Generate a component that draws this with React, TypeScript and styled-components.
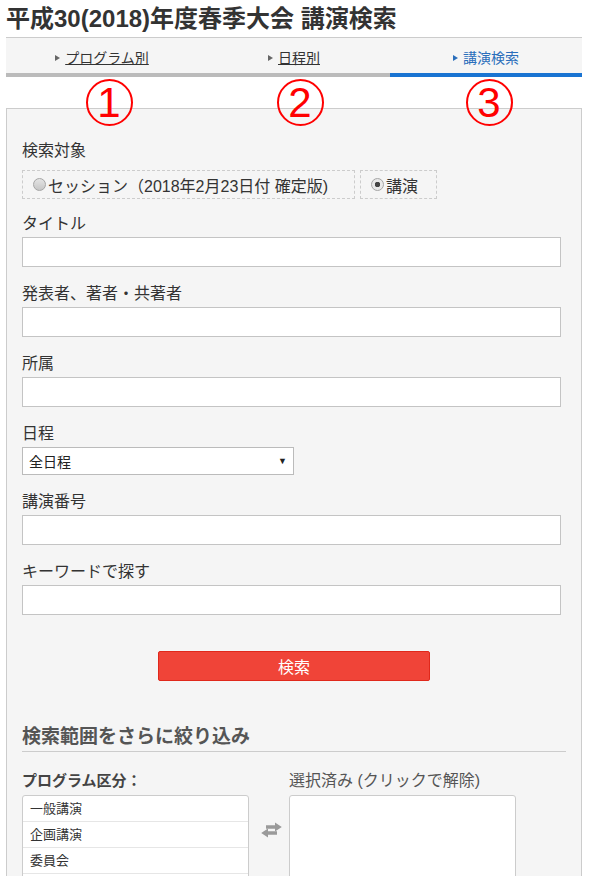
import styled, { createGlobalStyle } from "styled-components";

const GlobalStyle = createGlobalStyle`
  body {
    margin: 0;
    background: #fff;
    color: #333;
    font-family: "Liberation Sans", "Noto Sans CJK JP", sans-serif;
  }
`;

const Page = styled.div`
  width: 576px;
  padding: 4px 14px 0 6px;
`;

const Title = styled.h1`
  margin: 0 0 3px;
  font-size: 24px;
  line-height: 30px;
  font-weight: bold;
  color: #333;
`;

const TabsWrap = styled.div`
  position: relative;
`;

const TabBar = styled.div`
  display: grid;
  grid-template-columns: repeat(3, 1fr);
  border-top: 1px solid #ccc;
  background: #f5f5f5;
`;

const Tab = styled.div<{ $active?: boolean }>`
  display: flex;
  align-items: center;
  justify-content: center;
  height: 39px;
  padding-top: 4px;
  box-sizing: border-box;
  border-bottom: 4px solid ${(p) => (p.$active ? "#1a74d2" : "#bbb")};
  font-size: 14px;
  color: ${(p) => (p.$active ? "#2a6ebb" : "#333")};
`;

const Caret = styled.span<{ $active?: boolean }>`
  width: 0;
  height: 0;
  border-left: 5px solid ${(p) => (p.$active ? "#2a6ebb" : "#666")};
  border-top: 3.5px solid transparent;
  border-bottom: 3.5px solid transparent;
  margin-right: 5px;
`;

const TabLink = styled.span<{ $active?: boolean }>`
  text-decoration: ${(p) => (p.$active ? "none" : "underline")};
  line-height: 20px;
`;

const MarkRow = styled.div`
  position: absolute;
  top: 100%;
  left: 0;
  right: 0;
  display: grid;
  grid-template-columns: repeat(3, 1fr);
  padding-top: 2px;
  pointer-events: none;
  z-index: 2;
`;

const Mark = styled.div<{ $shift: number }>`
  justify-self: center;
  margin-left: ${(p) => p.$shift}px;
  width: 43px;
  height: 43px;
  border: 2px solid #f00;
  border-radius: 50%;
  color: #f00;
  font-family: "Liberation Sans", sans-serif;
  font-size: 42px;
  line-height: 44px;
  text-align: center;
`;

const Panel = styled.div`
  margin-top: 31px;
  border: 1px solid #ccc;
  background: #f5f5f5;
  padding: 31px 15px 40px;
`;

const Label = styled.div`
  font-size: 16px;
  line-height: 22px;
  margin-bottom: 2px;
  color: #333;
`;

const Field = styled.div`
  margin-bottom: 16px;
`;

const TargetLabel = styled(Label)`
  margin-bottom: 8px;
`;

const RadioRow = styled.div`
  display: flex;
  gap: 5px;
  margin-bottom: 14px;
`;

const RadioOption = styled.label<{ $padRight: number }>`
  display: inline-flex;
  align-items: center;
  height: 29px;
  box-sizing: border-box;
  border: 1px dashed #ccc;
  padding: 0 ${(p) => p.$padRight}px 0 10px;
  font-size: 16px;
  color: #333;
`;

const RadioDot = styled.span<{ $checked?: boolean }>`
  width: 13px;
  height: 13px;
  box-sizing: border-box;
  border-radius: 50%;
  border: 1px solid #a5a5a5;
  margin-right: 2px;
  background: ${(p) =>
    p.$checked
      ? "radial-gradient(circle, #444 0 2.5px, #e8e8e8 3px)"
      : "linear-gradient(#e4e4e4, #c6c6c6)"};
`;

const TextInput = styled.input`
  display: block;
  width: calc(100% - 5px);
  height: 30px;
  box-sizing: border-box;
  border: 1px solid #c4c4c4;
  background: #fff;
  margin: 0;
`;

const SelectBox = styled.div`
  display: flex;
  align-items: center;
  justify-content: space-between;
  width: 272px;
  height: 28px;
  box-sizing: border-box;
  border: 1px solid #bbb;
  background: #fff;
  padding: 0 6px;
  font-size: 14px;
  color: #222;
`;

const SelectArrow = styled.span`
  font-size: 9px;
  color: #222;
`;

const ButtonRow = styled.div`
  display: flex;
  justify-content: center;
  margin-top: 36px;
`;

const SearchButton = styled.button`
  width: 272px;
  height: 30px;
  border: 1px solid #e0281b;
  border-radius: 2px;
  background: #f04438;
  color: #fff;
  font-family: inherit;
  font-size: 16px;
  padding: 0;
`;

const SectionHead = styled.h2`
  margin: 44px 0 0;
  padding-bottom: 2px;
  border-bottom: 1px solid #ccc;
  font-size: 19px;
  line-height: 24px;
  font-weight: bold;
  color: #555;
`;

const Narrow = styled.div`
  display: grid;
  grid-template-columns: 227px 40px 227px;
  margin-top: 18px;
`;

const ColLabel = styled.div<{ $bold?: boolean }>`
  font-size: ${(p) => (p.$bold ? "15px" : "16px")};
  line-height: 22px;
  margin-bottom: 3px;
  font-weight: ${(p) => (p.$bold ? "bold" : "normal")};
  color: ${(p) => (p.$bold ? "#444" : "#555")};
`;

const ListBox = styled.div`
  height: 160px;
  box-sizing: border-box;
  border: 1px solid #ccc;
  border-radius: 3px;
  background: #fff;
  overflow: hidden;
`;

const ListItem = styled.div`
  height: 26px;
  box-sizing: border-box;
  border-bottom: 1px solid #e6e6e6;
  padding: 0 7px;
  font-size: 13px;
  line-height: 25px;
  color: #333;
`;

const SwapCell = styled.div`
  display: flex;
  justify-content: center;
  padding: 52px 0 0 4px;
  color: #9a9a9a;
`;

function SwapIcon() {
  return (
    <svg width="21" height="16" viewBox="0 0 21 16" fill="currentColor">
      <path d="M5 3.3 H14 V0.5 L20.8 5 L14 9.5 V6.7 H5 Z" />
      <path d="M16 9.3 H7 V6.5 L0.2 11 L7 15.5 V12.7 H16 Z" />
    </svg>
  );
}

const tabs = [
  { label: "プログラム別", active: false },
  { label: "日程別", active: false },
  { label: "講演検索", active: true },
];

const marks = [
  { text: "1", shift: 14 },
  { text: "2", shift: 12 },
  { text: "3", shift: 6 },
];

const fields = ["タイトル", "発表者、著者・共著者", "所属"];

const programs = ["一般講演", "企画講演", "委員会"];

export default function App() {
  return (
    <>
      <GlobalStyle />
      <Page>
        <Title>平成30(2018)年度春季大会 講演検索</Title>
        <TabsWrap>
          <TabBar>
            {tabs.map((t) => (
              <Tab key={t.label} $active={t.active}>
                <Caret $active={t.active} />
                <TabLink $active={t.active}>{t.label}</TabLink>
              </Tab>
            ))}
          </TabBar>
          <MarkRow>
            {marks.map((m) => (
              <Mark key={m.text} $shift={m.shift}>
                {m.text}
              </Mark>
            ))}
          </MarkRow>
        </TabsWrap>

        <Panel>
          <TargetLabel>検索対象</TargetLabel>
          <RadioRow>
            <RadioOption $padRight={26}>
              <RadioDot />
              セッション（2018年2月23日付 確定版)
            </RadioOption>
            <RadioOption $padRight={18}>
              <RadioDot $checked />
              講演
            </RadioOption>
          </RadioRow>

          {fields.map((f) => (
            <Field key={f}>
              <Label>{f}</Label>
              <TextInput type="text" />
            </Field>
          ))}

          <Field>
            <Label>日程</Label>
            <SelectBox>
              <span>全日程</span>
              <SelectArrow>▼</SelectArrow>
            </SelectBox>
          </Field>

          <Field>
            <Label>講演番号</Label>
            <TextInput type="text" />
          </Field>

          <Field>
            <Label>キーワードで探す</Label>
            <TextInput type="text" />
          </Field>

          <ButtonRow>
            <SearchButton>検索</SearchButton>
          </ButtonRow>

          <SectionHead>検索範囲をさらに絞り込み</SectionHead>

          <Narrow>
            <div>
              <ColLabel $bold>プログラム区分：</ColLabel>
              <ListBox>
                {programs.map((p) => (
                  <ListItem key={p}>{p}</ListItem>
                ))}
              </ListBox>
            </div>
            <SwapCell>
              <SwapIcon />
            </SwapCell>
            <div>
              <ColLabel>選択済み (クリックで解除)</ColLabel>
              <ListBox />
            </div>
          </Narrow>
        </Panel>
      </Page>
    </>
  );
}
